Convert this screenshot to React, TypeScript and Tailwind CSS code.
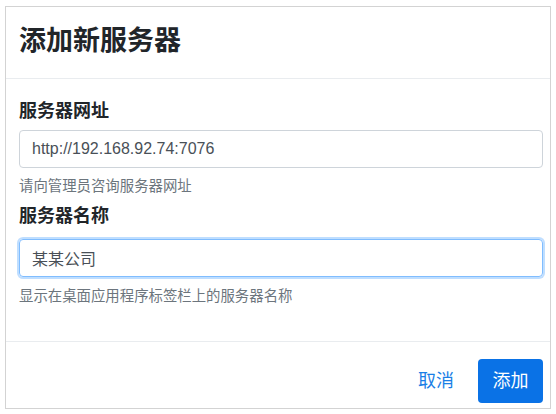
const font = {
  fontFamily: '"Liberation Sans", "Noto Sans CJK SC", sans-serif',
};

function Field({
  label,
  value,
  hint,
  focused,
  first,
}: {
  label: string;
  value: string;
  hint: string;
  focused?: boolean;
  first?: boolean;
}) {
  return (
    <div className={first ? "" : "mt-[6px]"}>
      <label className="block h-[27px] text-[18px] leading-[27px] font-bold text-[#212529]">
        {label}
      </label>
      <input
        readOnly
        defaultValue={value}
        className={
          focused
            ? "mt-[9px] block h-[38px] w-full rounded-[4px] border border-[#80bdff] px-[12px] text-[16px] text-[#495057] outline-none shadow-[0_0_0_2px_rgba(0,123,255,0.25)]"
            : "mt-[5px] block h-[38px] w-full rounded-[4px] border border-[#ced4da] px-[12px] text-[16px] text-[#495057] outline-none"
        }
      />
      <p
        className={
          (focused ? "mt-[9px]" : "mt-[8px]") +
          " h-[21px] text-[14.4px] leading-[21px] text-[#6c757d]"
        }
      >
        {hint}
      </p>
    </div>
  );
}

export default function App() {
  return (
    <div className="min-h-[414px] w-[556px] bg-white pt-[6px] pl-[5px]" style={font}>
      <div className="flex h-[403px] w-[546px] flex-col border border-[#d3d3d3] bg-white">
        <div className="border-b border-[#e9ecef] pt-[14px] pb-[17px] pl-[13px] pr-[7px]">
          <h1 className="h-[40px] text-[27px] leading-[40px] font-semibold text-[#212529]">
            添加新服务器
          </h1>
        </div>
        <div className="border-b border-[#e9ecef] pt-[19px] pb-[34px] pl-[13px] pr-[7px]">
          <Field
            first
            label="服务器网址"
            value="http://192.168.92.74:7076"
            hint="请向管理员咨询服务器网址"
          />
          <Field
            focused
            label="服务器名称"
            value="某某公司"
            hint="显示在桌面应用程序标签栏上的服务器名称"
          />
        </div>
        <div className="flex items-start justify-end pt-[17px] pb-[5px] pl-[13px] pr-[7px]">
          <button className="mt-[11px] mr-[24px] text-[18px] leading-[22px] text-[#1a7fe6]">
            取消
          </button>
          <button className="h-[44px] w-[65px] rounded-[4px] bg-[#0a72e6] text-[18px] text-white">
            添加
          </button>
        </div>
      </div>
    </div>
  );
}
